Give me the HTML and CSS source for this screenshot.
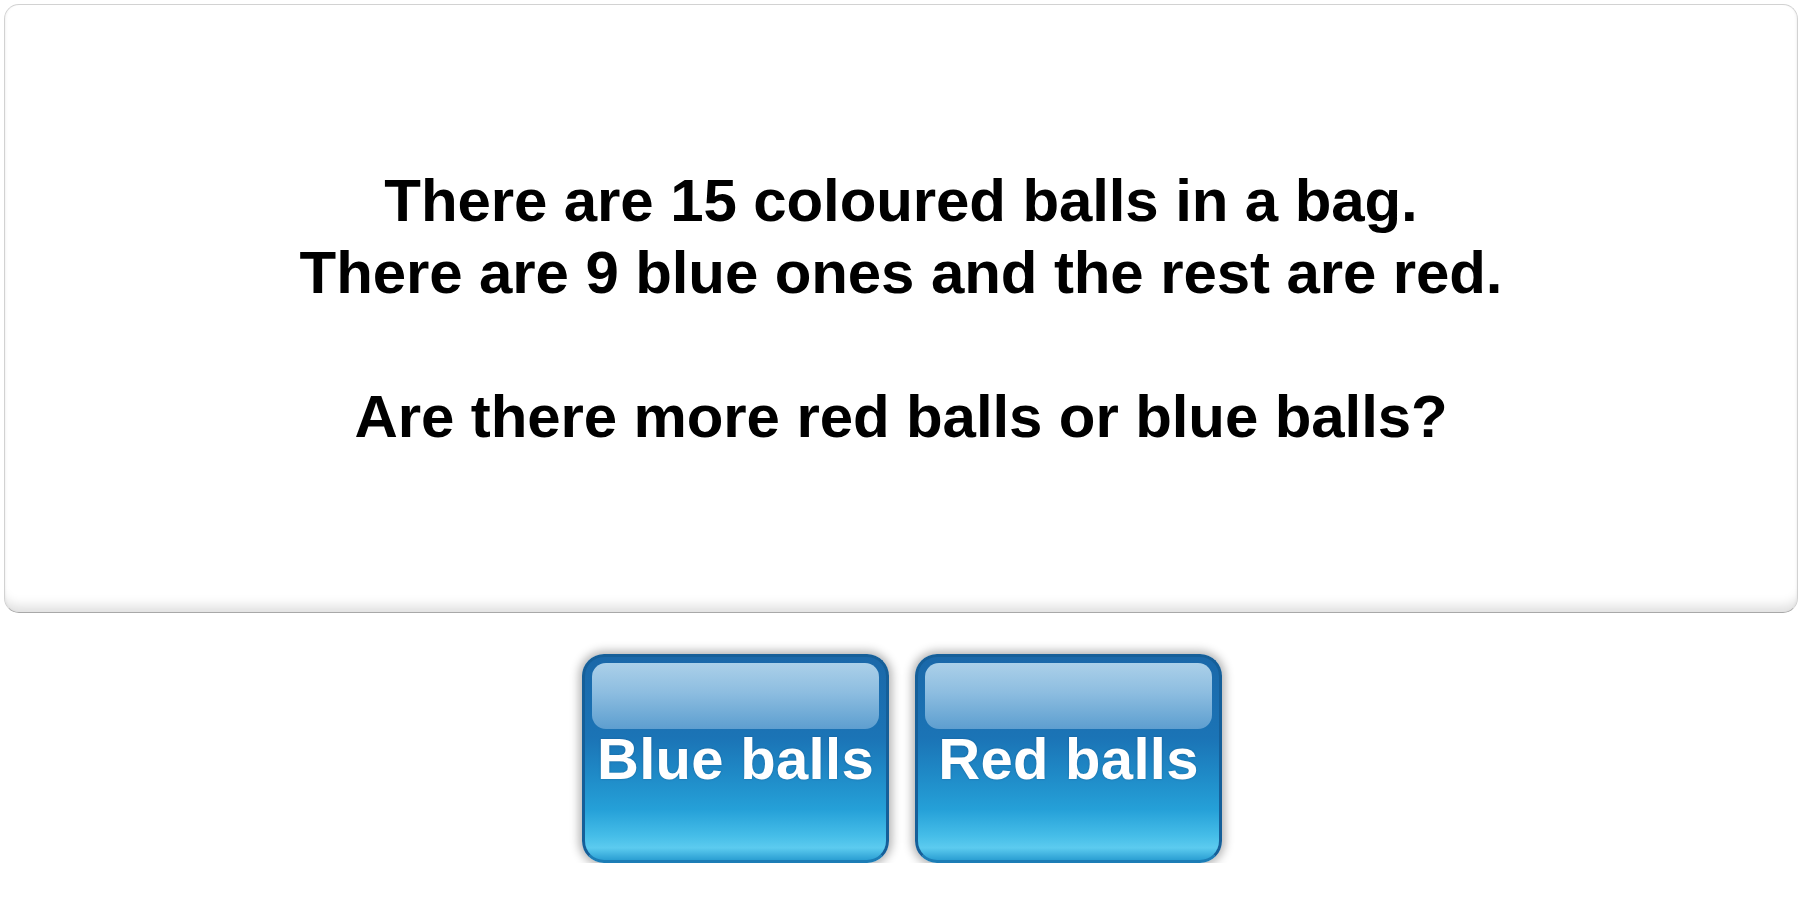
FILE: index.html
```html
<!DOCTYPE html>
<html lang="en">
<head>
<meta charset="utf-8">
<title>Question</title>
<link rel="stylesheet" href="styles.css">
</head>
<body>
<main class="page">
  <section class="card">
    <p class="question">There are 15 coloured balls in a bag.<br>There are 9 blue ones and the rest are red.<br><br>Are there more red balls or blue balls?</p>
  </section>
  <div class="answers">
    <button class="answer" type="button"><span class="label">Blue balls</span></button>
    <button class="answer" type="button"><span class="label">Red balls</span></button>
  </div>
</main>
</body>
</html>
```
FILE: styles.css
```css
html, body {
  margin: 0;
  padding: 0;
  background: #ffffff;
}
body {
  font-family: "Liberation Sans", Arial, sans-serif;
}
.page {
  padding: 4px 6px 0 4px;
}
.card {
  box-sizing: border-box;
  height: 609px;
  border: 1px solid #d2d2d2;
  border-bottom-color: #a8a8a8;
  border-radius: 15px;
  background: #ffffff;
  box-shadow: inset 0 -14px 12px -8px rgba(0,0,0,0.13), inset 2px 0 3px -2px rgba(0,0,0,0.08), inset -2px 0 3px -2px rgba(0,0,0,0.08);
  display: flex;
  align-items: center;
  justify-content: center;
}
.question {
  margin: 0;
  font-size: 60px;
  line-height: 72px;
  font-weight: bold;
  color: #000;
  text-align: center;
  letter-spacing: -0.1px;
}
.answers {
  display: flex;
  justify-content: center;
  gap: 26px;
  margin-top: 41px;
  padding-left: 2px;
}
.answer {
  position: relative;
  box-sizing: border-box;
  width: 307px;
  height: 209px;
  padding: 0;
  border: 3px solid #155f99;
  border-bottom-color: #1c7db6;
  border-radius: 22px;
  background: linear-gradient(to bottom, #1a68a9 0%, #1b74b6 40%, #1f8ac7 58%, #25a0d8 75%, #45bde8 88%, #5ccbef 94%, #2b9fd3 100%);
  box-shadow: 0 0 10px 3px rgba(0,0,0,0.3);
  font-family: "Liberation Sans", Arial, sans-serif;
  font-size: 58px;
  font-weight: bold;
  color: #ffffff;
  cursor: pointer;
  overflow: hidden;
}
.answer::before {
  content: "";
  position: absolute;
  top: 6px;
  left: 7px;
  right: 7px;
  height: 66px;
  border-radius: 14px;
  background: linear-gradient(to bottom, #abd0e9 0%, #8dbde0 45%, #6aa7d4 85%, #5e9ecf 100%);
}
.label {
  position: relative;
  display: block;
  text-shadow: 0 0 2px rgba(0,40,80,0.35);
  letter-spacing: 0.3px;
}
```
